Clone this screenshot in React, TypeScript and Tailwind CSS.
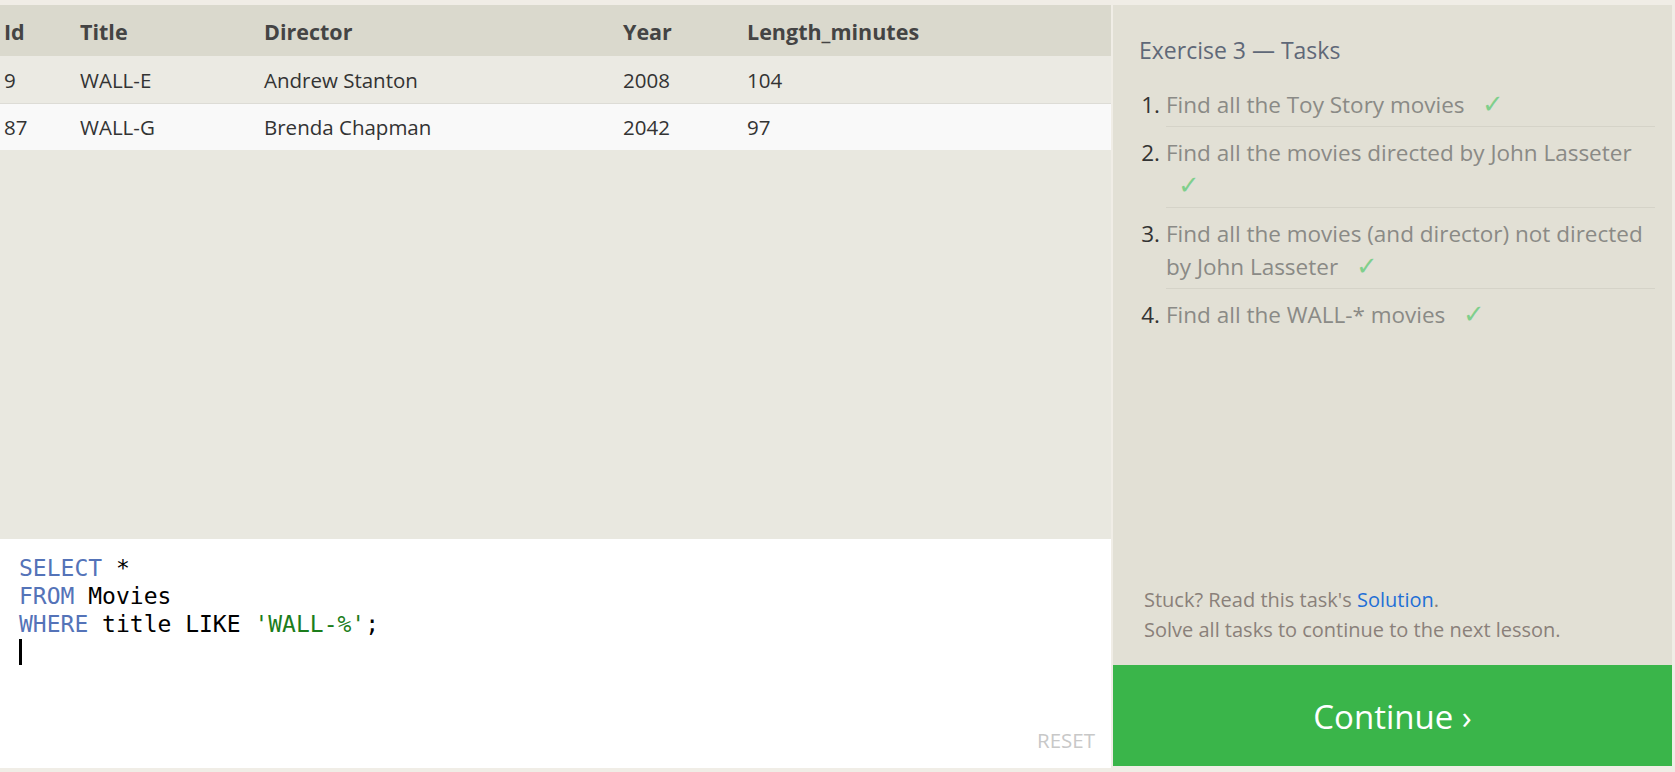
const rows = [
  { id: "9", title: "WALL-E", director: "Andrew Stanton", year: "2008", length: "104" },
  { id: "87", title: "WALL-G", director: "Brenda Chapman", year: "2042", length: "97" },
];

const tasks = [
  "Find all the Toy Story movies",
  "Find all the movies directed by John Lasseter",
  "Find all the movies (and director) not directed by John Lasseter",
  "Find all the WALL-* movies",
];

const cols = "grid grid-cols-[76px_184px_359px_124px_1fr] pl-[4px] items-center";

export default function App() {
  return (
    <div className="w-[1675px] h-[772px] bg-[#f0ede6] flex pt-[5px] pb-[4px] pr-[3px] gap-[2px] font-['Open_Sans',sans-serif] overflow-hidden">
      <div className="w-[1111px] flex flex-col">
        <div className="flex-1 bg-[#e9e8e0] text-[20.5px] text-[#333]">
          <div className={`${cols} h-[51px] pt-[3px] bg-[#dad9cd] font-bold text-[21.5px] text-[#444]`}>
            <div>Id</div>
            <div>Title</div>
            <div>Director</div>
            <div>Year</div>
            <div>Length_minutes</div>
          </div>
          {rows.map((r, i) => (
            <div
              key={r.id}
              className={`${cols} ${i % 2 ? "h-[46px] bg-[#f9f9f9]" : "h-[48px] pt-[2px] bg-[#ebeae3] border-b border-[#dddcd6]"}`}
            >
              <div>{r.id}</div>
              <div>{r.title}</div>
              <div>{r.director}</div>
              <div>{r.year}</div>
              <div>{r.length}</div>
            </div>
          ))}
        </div>

        <div className="h-[229px] bg-white relative pl-[19px] pt-[15px] font-['DejaVu_Sans_Mono',monospace] text-[23px] leading-[28px] text-black">
          <div>
            <span className="text-[#5473b8]">SELECT</span> *
          </div>
          <div>
            <span className="text-[#5473b8]">FROM</span> Movies
          </div>
          <div>
            <span className="text-[#5473b8]">WHERE</span> title LIKE <span className="text-[#1c7d1c]">'WALL-%'</span>;
          </div>
          <div className="h-[28px] flex items-center">
            <div className="w-[2.5px] h-[26px] bg-black" />
          </div>
          <div className="absolute right-[16px] bottom-[14px] font-['Open_Sans',sans-serif] text-[20.5px] text-[#c8c8c8]">
            RESET
          </div>
        </div>
      </div>

      <div className="w-[559px] flex flex-col">
        <div className="flex-1 bg-[#e2e0d5] pt-[31px] pl-[26px] pr-[17px] flex flex-col">
          <div className="text-[23px] text-[#5f6878] leading-[28px]">Exercise 3 — Tasks</div>
          <ol className="mt-[15px] text-[22.5px] leading-[33px]">
            {tasks.map((t, i) => (
              <li key={t} className="flex group">
                <span className="w-[27px] text-right pr-[6px] text-[#333] pt-[9px]">{i + 1}.</span>
                <div className="flex-1 pt-[9px] pb-[5px] border-b border-[#d5d3c8] group-last:border-b-0 text-[#8a8a86]">
                  {t}{" "}
                  <span className="inline-block ml-[12px] text-[26px] leading-[26px] font-light text-[#7fcf8c]">✓</span>
                </div>
              </li>
            ))}
          </ol>
          <div className="mt-auto mb-[20px] pl-[5px] text-[20px] leading-[30px] text-[#8a807a]">
            <div>
              Stuck? Read this task's <span className="text-[#1f6fd6]">Solution</span>.
            </div>
            <div>Solve all tasks to continue to the next lesson.</div>
          </div>
        </div>
        <div className="h-[101px] mb-[2px] bg-[#3ab54a] flex items-center justify-center pt-[2px] text-white text-[33px]">
          Continue ›
        </div>
      </div>
    </div>
  );
}
